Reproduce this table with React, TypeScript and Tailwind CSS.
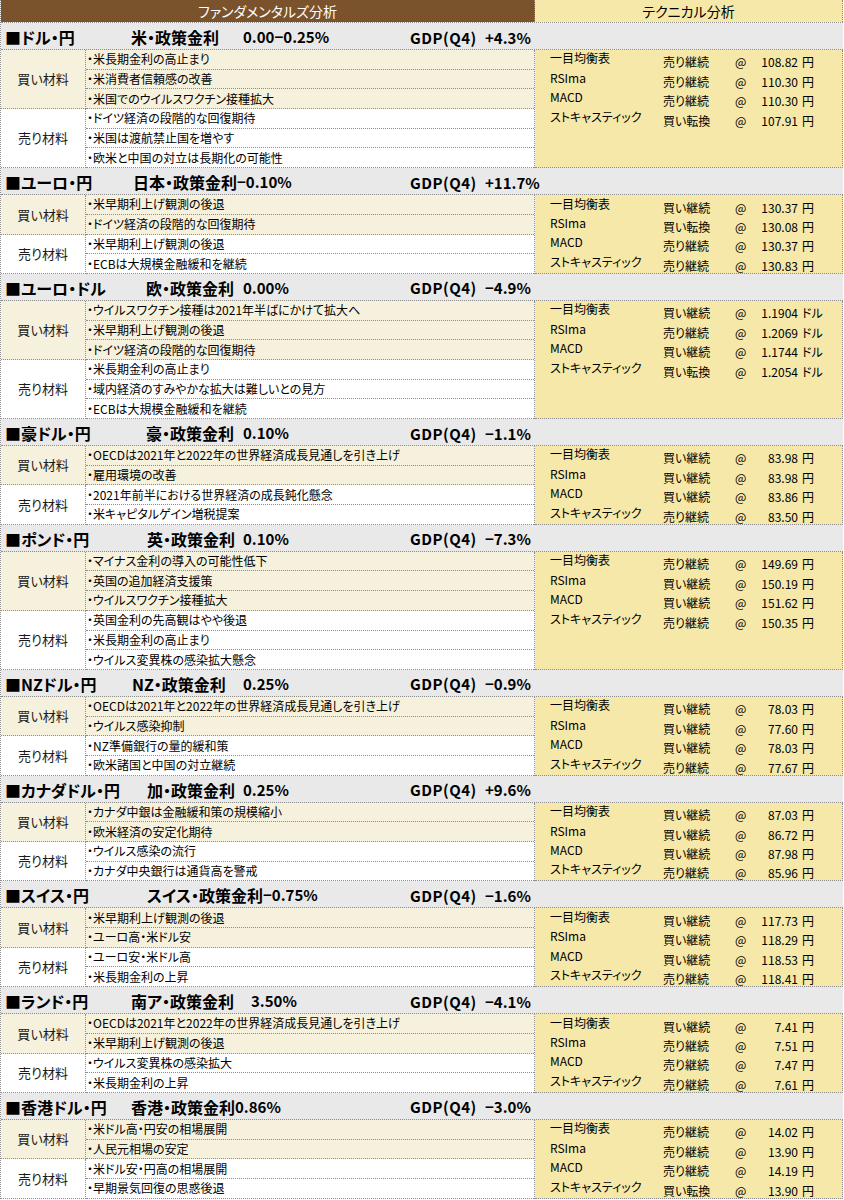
import * as React from "react";

type Tech = { signal: string; price: string };

interface Section {
  pair: string;
  rateLabel: string;
  rate: string;
  // left offset / width of the policy-rate label box, so the value lands where the sheet has it
  rateBox: string;
  gdp: string;
  unit: string;
  buy: string[];
  sell: string[];
  tech: Tech[];
}

const TECH_NAMES = ["一目均衡表", "RSIma", "MACD", "ストキャスティック"];

const sections: Section[] = [
  {
    pair: "■ドル・円",
    rateLabel: "米・政策金利",
    rate: "0.00−0.25%",
    rateBox: "w-[112px]",
    gdp: "+4.3%",
    unit: "円",
    buy: ["・米長期金利の高止まり", "・米消費者信頼感の改善", "・米国でのウイルスワクチン接種拡大"],
    sell: ["・ドイツ経済の段階的な回復期待", "・米国は渡航禁止国を増やす", "・欧米と中国の対立は長期化の可能性"],
    tech: [
      { signal: "売り継続", price: "108.82" },
      { signal: "売り継続", price: "110.30" },
      { signal: "売り継続", price: "110.30" },
      { signal: "買い転換", price: "107.91" },
    ],
  },
  {
    pair: "■ユーロ・円",
    rateLabel: "日本・政策金利",
    rate: "−0.10%",
    rateBox: "pl-[2px]",
    gdp: "+11.7%",
    unit: "円",
    buy: ["・米早期利上げ観測の後退", "・ドイツ経済の段階的な回復期待"],
    sell: ["・米早期利上げ観測の後退", "・ECBは大規模金融緩和を継続"],
    tech: [
      { signal: "買い継続", price: "130.37" },
      { signal: "買い転換", price: "130.08" },
      { signal: "売り継続", price: "130.37" },
      { signal: "売り継続", price: "130.83" },
    ],
  },
  {
    pair: "■ユーロ・ドル",
    rateLabel: "欧・政策金利",
    rate: "0.00%",
    rateBox: "w-[112px] pl-[15px]",
    gdp: "−4.9%",
    unit: "ドル",
    buy: [
      "・ウイルスワクチン接種は2021年半ばにかけて拡大へ",
      "・米早期利上げ観測の後退",
      "・ドイツ経済の段階的な回復期待",
    ],
    sell: ["・米長期金利の高止まり", "・域内経済のすみやかな拡大は難しいとの見方", "・ECBは大規模金融緩和を継続"],
    tech: [
      { signal: "買い継続", price: "1.1904" },
      { signal: "売り継続", price: "1.2069" },
      { signal: "買い継続", price: "1.1744" },
      { signal: "買い転換", price: "1.2054" },
    ],
  },
  {
    pair: "■豪ドル・円",
    rateLabel: "豪・政策金利",
    rate: "0.10%",
    rateBox: "w-[112px] pl-[15px]",
    gdp: "−1.1%",
    unit: "円",
    buy: ["・OECDは2021年と2022年の世界経済成長見通しを引き上げ", "・雇用環境の改善"],
    sell: ["・2021年前半における世界経済の成長鈍化懸念", "・米キャピタルゲイン増税提案"],
    tech: [
      { signal: "買い継続", price: "83.98" },
      { signal: "買い継続", price: "83.98" },
      { signal: "買い継続", price: "83.86" },
      { signal: "売り継続", price: "83.50" },
    ],
  },
  {
    pair: "■ポンド・円",
    rateLabel: "英・政策金利",
    rate: "0.10%",
    rateBox: "w-[112px] pl-[16px]",
    gdp: "−7.3%",
    unit: "円",
    buy: ["・マイナス金利の導入の可能性低下", "・英国の追加経済支援策", "・ウイルスワクチン接種拡大"],
    sell: ["・英国金利の先高観はやや後退", "・米長期金利の高止まり", "・ウイルス変異株の感染拡大懸念"],
    tech: [
      { signal: "売り継続", price: "149.69" },
      { signal: "買い継続", price: "150.19" },
      { signal: "買い継続", price: "151.62" },
      { signal: "売り継続", price: "150.35" },
    ],
  },
  {
    pair: "■NZドル・円",
    rateLabel: "NZ・政策金利",
    rate: "0.25%",
    rateBox: "w-[112px] pl-[1px]",
    gdp: "−0.9%",
    unit: "円",
    buy: ["・OECDは2021年と2022年の世界経済成長見通しを引き上げ", "・ウイルス感染抑制"],
    sell: ["・NZ準備銀行の量的緩和策", "・欧米諸国と中国の対立継続"],
    tech: [
      { signal: "買い継続", price: "78.03" },
      { signal: "買い継続", price: "77.60" },
      { signal: "買い継続", price: "78.03" },
      { signal: "売り継続", price: "77.67" },
    ],
  },
  {
    pair: "■カナダドル・円",
    rateLabel: "加・政策金利",
    rate: "0.25%",
    rateBox: "w-[112px] pl-[16px]",
    gdp: "+9.6%",
    unit: "円",
    buy: ["・カナダ中銀は金融緩和策の規模縮小", "・欧米経済の安定化期待"],
    sell: ["・ウイルス感染の流行", "・カナダ中央銀行は通貨高を警戒"],
    tech: [
      { signal: "買い継続", price: "87.03" },
      { signal: "買い継続", price: "86.72" },
      { signal: "買い継続", price: "87.98" },
      { signal: "売り継続", price: "85.96" },
    ],
  },
  {
    pair: "■スイス・円",
    rateLabel: "スイス・政策金利",
    rate: "−0.75%",
    rateBox: "pl-[16px]",
    gdp: "−1.6%",
    unit: "円",
    buy: ["・米早期利上げ観測の後退", "・ユーロ高・米ドル安"],
    sell: ["・ユーロ安・米ドル高", "・米長期金利の上昇"],
    tech: [
      { signal: "買い継続", price: "117.73" },
      { signal: "買い継続", price: "118.29" },
      { signal: "買い継続", price: "118.53" },
      { signal: "売り継続", price: "118.41" },
    ],
  },
  {
    pair: "■ランド・円",
    rateLabel: "南ア・政策金利",
    rate: "3.50%",
    rateBox: "w-[120px]",
    gdp: "−4.1%",
    unit: "円",
    buy: ["・OECDは2021年と2022年の世界経済成長見通しを引き上げ", "・米早期利上げ観測の後退"],
    sell: ["・ウイルス変異株の感染拡大", "・米長期金利の上昇"],
    tech: [
      { signal: "買い継続", price: "7.41" },
      { signal: "売り継続", price: "7.51" },
      { signal: "売り継続", price: "7.47" },
      { signal: "売り継続", price: "7.61" },
    ],
  },
  {
    pair: "■香港ドル・円",
    rateLabel: "香港・政策金利",
    rate: "0.86%",
    rateBox: "",
    gdp: "−3.0%",
    unit: "円",
    buy: ["・米ドル高・円安の相場展開", "・人民元相場の安定"],
    sell: ["・米ドル安・円高の相場展開", "・早期景気回復の思惑後退"],
    tech: [
      { signal: "売り継続", price: "14.02" },
      { signal: "売り継続", price: "13.90" },
      { signal: "売り継続", price: "14.19" },
      { signal: "買い転換", price: "13.90" },
    ],
  },
];

function Group({ label, items, buy }: { label: string; items: string[]; buy: boolean }) {
  return (
    <div className={`flex ${buy ? "bg-[#f6f1dc]" : "bg-white"}`}>
      <div className="flex w-[85px] shrink-0 items-center justify-center border-r border-b border-dotted border-[#8c8c8c] text-[13px] text-[#1a1a1a]">
        {label}
      </div>
      <div className="flex-1">
        {items.map((item, i) => (
          <div
            key={i}
            className="flex h-[19.7px] items-center border-b border-dotted border-[#8c8c8c] pl-[1px] text-[12px] leading-none whitespace-nowrap"
          >
            {item}
          </div>
        ))}
      </div>
    </div>
  );
}

function SectionBlock({ s }: { s: Section }) {
  return (
    <div>
      <div className="flex h-[27px] items-center border-b border-dotted border-[#8c8c8c] bg-[#e9e9e9] pt-[2px] text-[16px] leading-none font-bold whitespace-nowrap">
        <div className="w-[130px] shrink-0 pl-[4px]">{s.pair}</div>
        <div className="flex w-[279px] shrink-0">
          <div className={`shrink-0 ${s.rateBox}`}>{s.rateLabel}</div>
          <div className="text-[15px]">{s.rate}</div>
        </div>
        <div className="w-[75px] shrink-0 text-[15px] tracking-[0.5px]">GDP(Q4)</div>
        <div className="text-[15px]">{s.gdp}</div>
      </div>
      <div className="flex">
        <div className="w-[534px] shrink-0 border-r border-dotted border-[#8c8c8c]">
          <Group label="買い材料" items={s.buy} buy />
          <Group label="売り材料" items={s.sell} buy={false} />
        </div>
        <div className="flex-1 border-r border-b border-dotted border-[#8c8c8c] bg-[#f5e8a8] pl-[15px]">
          {s.tech.map((t, i) => (
            <div key={i} className="flex h-[19.45px] items-end text-[12px] leading-none whitespace-nowrap">
              <div className="w-[113px] shrink-0 pb-[5px]">{TECH_NAMES[i]}</div>
              <div className="w-[72px] shrink-0 pb-[1px]">{t.signal}</div>
              <div className="w-[20px] shrink-0 pb-[1px]">@</div>
              <div className="w-[43px] shrink-0 pb-[1px] text-right">{t.price}</div>
              <div className="pb-[1px] pl-[4px]">{s.unit}</div>
            </div>
          ))}
        </div>
      </div>
    </div>
  );
}

export default function App() {
  return (
    <div className="w-[843px] border-l border-dotted border-[#8c8c8c] bg-white font-['Noto_Sans_CJK_JP',sans-serif] text-black [font-feature-settings:'palt']">
      <div className="flex h-[23px] border-b border-dotted border-[#8c8c8c] text-[14px] leading-none">
        <div className="flex w-[534px] shrink-0 items-center justify-center border-r border-dotted border-[#8c8c8c] bg-[#7a522c] text-white">
          ファンダメンタルズ分析
        </div>
        <div className="flex flex-1 items-center justify-center border-r border-dotted border-[#8c8c8c] bg-[#f5e8a8]">
          テクニカル分析
        </div>
      </div>
      {sections.map((s) => (
        <SectionBlock key={s.pair} s={s} />
      ))}
    </div>
  );
}
